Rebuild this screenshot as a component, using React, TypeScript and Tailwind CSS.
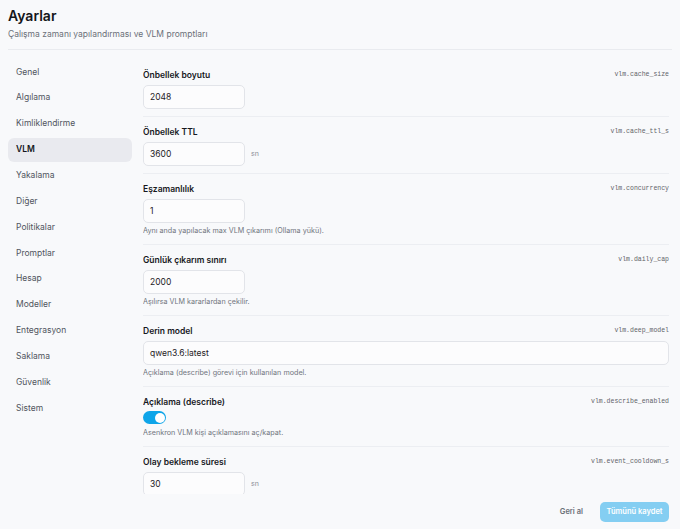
import React from "react";

const navItems = [
  "Genel",
  "Algılama",
  "Kimliklendirme",
  "VLM",
  "Yakalama",
  "Diğer",
  "Politikalar",
  "Promptlar",
  "Hesap",
  "Modeller",
  "Entegrasyon",
  "Saklama",
  "Güvenlik",
  "Sistem",
];

type Field = {
  label: string;
  keyName: string;
  kind: "number" | "text" | "toggle";
  value?: string;
  unit?: string;
  help?: string;
};

const fields: Field[] = [
  { label: "Önbellek boyutu", keyName: "vlm.cache_size", kind: "number", value: "2048" },
  { label: "Önbellek TTL", keyName: "vlm.cache_ttl_s", kind: "number", value: "3600", unit: "sn" },
  {
    label: "Eşzamanlılık",
    keyName: "vlm.concurrency",
    kind: "number",
    value: "1",
    help: "Aynı anda yapılacak max VLM çıkarımı (Ollama yükü).",
  },
  {
    label: "Günlük çıkarım sınırı",
    keyName: "vlm.daily_cap",
    kind: "number",
    value: "2000",
    help: "Aşılırsa VLM kararlardan çekilir.",
  },
  {
    label: "Derin model",
    keyName: "vlm.deep_model",
    kind: "text",
    value: "qwen3.6:latest",
    help: "Açıklama (describe) görevi için kullanılan model.",
  },
  {
    label: "Açıklama (describe)",
    keyName: "vlm.describe_enabled",
    kind: "toggle",
    help: "Asenkron VLM kişi açıklamasını aç/kapat.",
  },
  { label: "Olay bekleme süresi", keyName: "vlm.event_cooldown_s", kind: "number", value: "30", unit: "sn" },
];

function Toggle() {
  return (
    <div className="mt-[1px] flex h-[13px] w-[23px] items-center justify-end rounded-full bg-[#0ea5e9] px-[1.5px]">
      <div className="h-[10px] w-[10px] rounded-full bg-white" />
    </div>
  );
}

function FieldRow({ field, first }: { field: Field; first: boolean }) {
  return (
    <div className={`${first ? "" : "border-t border-[#eceef2]"} pt-[7px] pb-[7px]`}>
      <div className="flex h-4 items-center justify-between">
        <span className="text-[8.5px] font-semibold text-[#16181d]">{field.label}</span>
        <span className="font-['Liberation_Mono',monospace] text-[6.5px] text-[#5f6368]">{field.keyName}</span>
      </div>
      {field.kind === "toggle" ? (
        <Toggle />
      ) : (
        <div className="mt-0.5 flex items-center gap-[6px]">
          <div
            className={`${
              field.kind === "text" ? "w-full" : "w-[102px]"
            } flex h-6 items-center rounded-[5px] border border-[#e2e4e9] bg-[#fcfcfd] px-[6px] text-[8.5px] text-[#1f2126]`}
          >
            {field.value}
          </div>
          {field.unit && <span className="text-[7px] text-[#8a8f98]">{field.unit}</span>}
        </div>
      )}
      {field.help && (
        <div className={`${field.kind === "toggle" ? "mt-[3px]" : "mt-0.5"} h-3 text-[7.2px] leading-3 text-[#70757e]`}>
          {field.help}
        </div>
      )}
    </div>
  );
}

export default function App() {
  return (
    <div className="flex h-screen flex-col bg-[#f8f9fb] px-2 font-['Inter',sans-serif]">
      <header className="border-b border-[#e9ebef] pt-1.5 pb-[9.5px]">
        <h1 className="text-[14px] leading-5 font-semibold text-[#14161a]">Ayarlar</h1>
        <p className="mt-[1.5px] text-[8.5px] leading-3 text-[#6b7079]">
          Çalışma zamanı yapılandırması ve VLM promptları
        </p>
      </header>

      <div className="flex min-h-0 flex-1 gap-[11px]">
        <nav className="flex w-[124px] shrink-0 flex-col gap-[1.85px] pt-[10px]">
          {navItems.map((item) => (
            <div
              key={item}
              className={`flex h-6 items-center rounded-[6px] px-2 text-[8.5px] ${
                item === "VLM" ? "bg-[#e9eaef] font-semibold text-[#14161a]" : "text-[#50555e]"
              }`}
            >
              {item}
            </div>
          ))}
        </nav>

        <main className="min-w-0 flex-1 overflow-hidden pt-[10px] pr-[3px]">
          {fields.map((f, i) => (
            <FieldRow key={f.keyName} field={f} first={i === 0} />
          ))}
        </main>
      </div>

      <footer className="flex h-[35px] shrink-0 items-center justify-end gap-[9px] pr-[3px]">
        <button className="h-5 px-2 text-[7.5px] font-semibold text-[#6b7079]">Geri al</button>
        <button className="flex h-5 w-[69px] items-center justify-center rounded-[5px] bg-[#84cef2] text-[7.5px] font-semibold text-white">
          Tümünü kaydet
        </button>
      </footer>
    </div>
  );
}
